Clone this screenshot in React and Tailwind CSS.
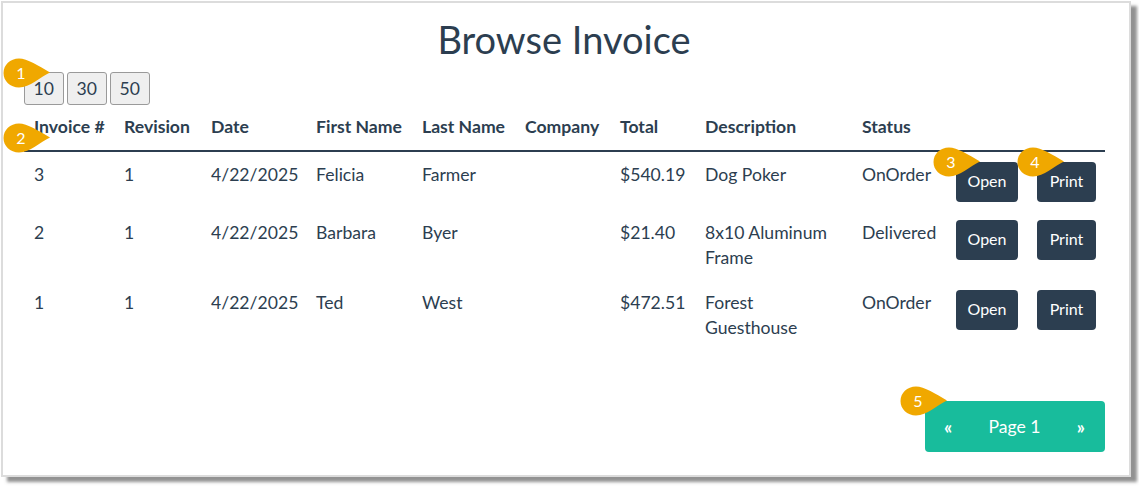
const rows = [
  { id: "3", rev: "1", date: "4/22/2025", first: "Felicia", last: "Farmer", total: "$540.19", desc: "Dog Poker", status: "OnOrder", h: "h-[59px]" },
  { id: "2", rev: "1", date: "4/22/2025", first: "Barbara", last: "Byer", total: "$21.40", desc: "8x10 Aluminum Frame", status: "Delivered", h: "h-[70px]" },
  { id: "1", rev: "1", date: "4/22/2025", first: "Ted", last: "West", total: "$472.51", desc: "Forest Guesthouse", status: "OnOrder", h: "h-[70px]" },
];
const cols = [
  ["Invoice #", "w-[90px]"], ["Revision", "w-[87px]"], ["Date", "w-[105px]"], ["First Name", "w-[106px]"], ["Last Name", "w-[103px]"],
  ["Company", "w-[95px]"], ["Total", "w-[85px]"], ["Description", "w-[157px]"], ["Status", "w-[95px]"],
];

function Badge({ n, className }) {
  return (
    <div className={"absolute w-[48px] h-[30px] " + className}>
      <svg width="48" height="30" viewBox="0 0 48 30" className="absolute inset-0">
        <path d="M16 0.5C24 0.5 36 8 47 14.5C37 19 27 29.5 16 29.5C7 29.5 0.5 23 0.5 15C0.5 7 7 0.5 16 0.5Z" fill="#f0a800" />
      </svg>
      <span className="absolute left-0 top-0 w-[36px] h-[30px] flex items-center justify-center text-white text-[16px]">{n}</span>
    </div>
  );
}

function Btn({ children, className }) {
  return <button className={"h-[40px] pb-[3px] rounded-[4px] bg-[#2c3e50] text-white text-[16px] flex items-center justify-center " + className}>{children}</button>;
}

export default function App() {
  return (
    <div className="w-[1139px] h-[486px] bg-white relative overflow-hidden font-['Lato','Liberation_Sans',sans-serif] text-[#2c3e50]">
      <div className="ml-[1px] mt-[1px] w-[1130px] h-[476px] bg-white border-2 border-[#dcdcdc] shadow-[6px_5px_3px_rgba(110,110,110,0.75)] pl-[21px] pr-[23px]">
        <h1 className="text-[38px] leading-[48px] text-center mt-[12px] pr-[2px]">Browse Invoice</h1>
        <div className="flex gap-[3.5px] mt-[9px]">
          {["10", "30", "50"].map((v) => (
            <button key={v} className="h-[33px] w-[39.5px] bg-[#efefef] border-[1.5px] border-[#9a9a9a] rounded-[3px] text-[17.6px] text-[#2c3e50] leading-none">{v}</button>
          ))}
        </div>
        <table className="table-fixed w-[1081px] mt-[5px] text-[17.6px] leading-[25px] border-collapse">
          <thead>
            <tr className="border-b-2 border-[#2c3e50] h-[41px]">
              {cols.map(([c, w]) => (
                <th key={c} className={"text-left font-bold pl-[10px] pr-0 pb-[7px] whitespace-nowrap " + w}>{c}</th>
              ))}
              <th className="w-[158px]"></th>
            </tr>
          </thead>
          <tbody>
            {rows.map((r) => {
              const cell = "align-top pl-[10px] pr-0 pt-[10px]";
              return (
                <tr key={r.id} className={r.h}>
                  <td className={cell}>{r.id}</td>
                  <td className={cell}>{r.rev}</td>
                  <td className={cell}>{r.date}</td>
                  <td className={cell}>{r.first}</td>
                  <td className={cell}>{r.last}</td>
                  <td className={cell}></td>
                  <td className={cell}>{r.total}</td>
                  <td className="align-top pl-[10px] pr-[10px] pt-[10px]">{r.desc}</td>
                  <td className={cell}>{r.status}</td>
                  <td className="align-top pt-[10px] pl-[9px]">
                    <div className="flex gap-[19px]">
                      <Btn className="w-[62px]">Open</Btn>
                      <Btn className="w-[59px]">Print</Btn>
                    </div>
                  </td>
                </tr>
              );
            })}
          </tbody>
        </table>
        <div className="flex justify-end mt-[51px] pr-[1px]">
          <div className="w-[180px] h-[51px] rounded-[4px] bg-[#18bc9c] text-white flex items-center justify-between pl-[19px] pr-[20px] pt-[1px] text-[17.6px]">
            <span className="font-bold text-[18px]">«</span>
            <span>Page 1</span>
            <span className="font-bold text-[18px]">»</span>
          </div>
        </div>
      </div>
      <Badge n="1" className="left-[3px] top-[58px]" />
      <Badge n="2" className="left-[3px] top-[123px]" />
      <Badge n="3" className="left-[933px] top-[147px]" />
      <Badge n="4" className="left-[1017px] top-[147px]" />
      <Badge n="5" className="left-[900px] top-[386px]" />
    </div>
  );
}
